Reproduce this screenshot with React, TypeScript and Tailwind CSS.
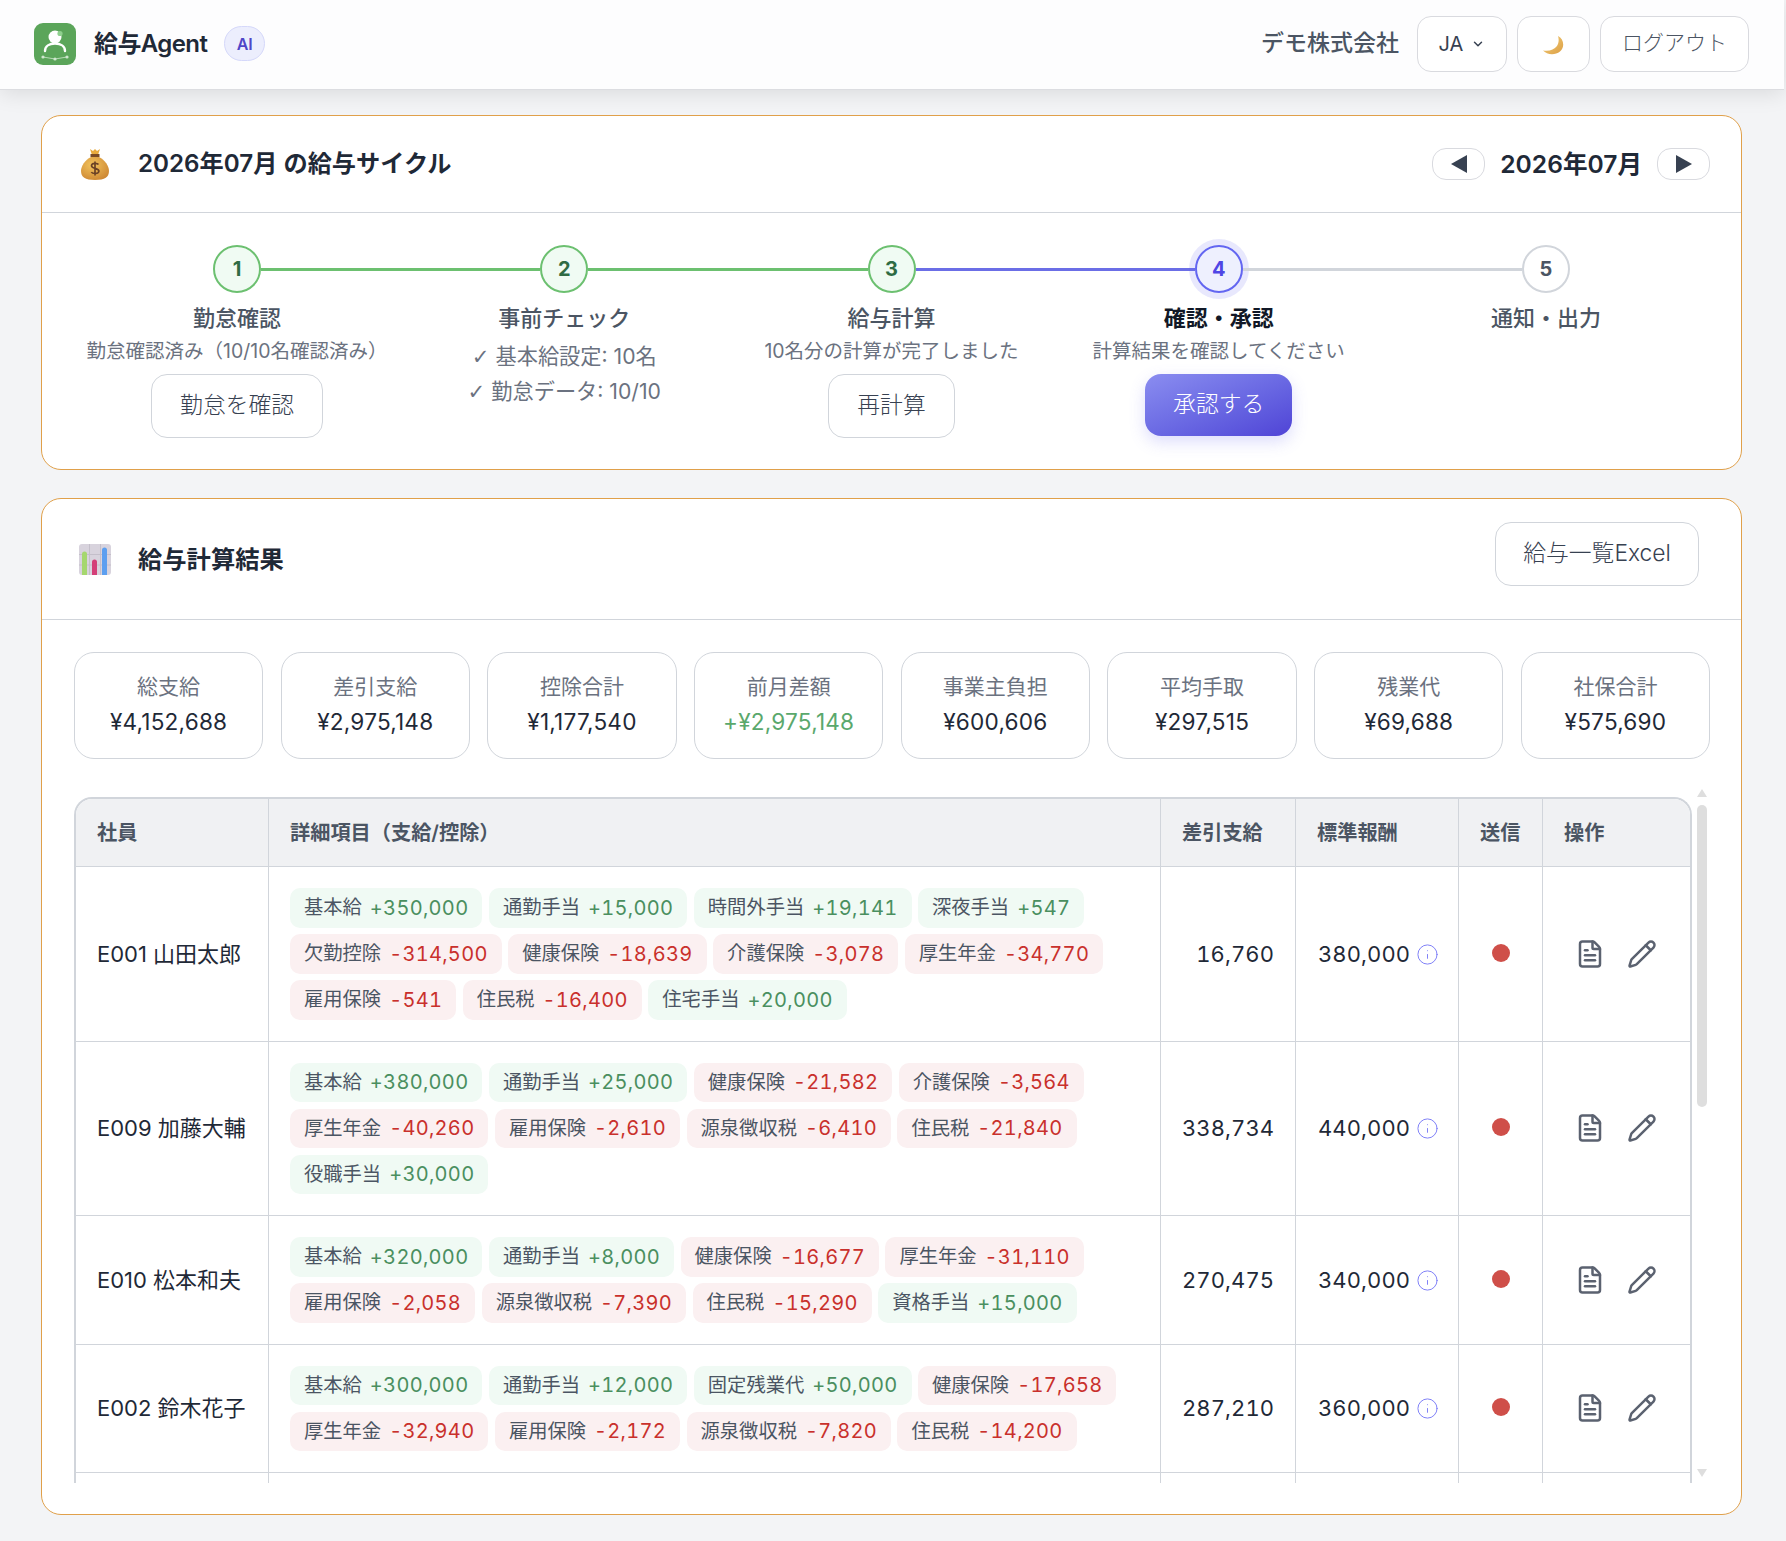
import React from "react";
import { ChevronDown, FileText, Info, Pencil } from "lucide-react";

interface Item {
  name: string;
  value: string;
}

interface Row {
  employee: string;
  net: string;
  standard: string;
  items: Item[];
}

const it = (name: string, value: string): Item => ({ name, value });

const rows: Row[] = [
  {
    employee: "E001 山田太郎",
    net: "16,760",
    standard: "380,000",
    items: [
      it("基本給", "+350,000"),
      it("通勤手当", "+15,000"),
      it("時間外手当", "+19,141"),
      it("深夜手当", "+547"),
      it("欠勤控除", "-314,500"),
      it("健康保険", "-18,639"),
      it("介護保険", "-3,078"),
      it("厚生年金", "-34,770"),
      it("雇用保険", "-541"),
      it("住民税", "-16,400"),
      it("住宅手当", "+20,000"),
    ],
  },
  {
    employee: "E009 加藤大輔",
    net: "338,734",
    standard: "440,000",
    items: [
      it("基本給", "+380,000"),
      it("通勤手当", "+25,000"),
      it("健康保険", "-21,582"),
      it("介護保険", "-3,564"),
      it("厚生年金", "-40,260"),
      it("雇用保険", "-2,610"),
      it("源泉徴収税", "-6,410"),
      it("住民税", "-21,840"),
      it("役職手当", "+30,000"),
    ],
  },
  {
    employee: "E010 松本和夫",
    net: "270,475",
    standard: "340,000",
    items: [
      it("基本給", "+320,000"),
      it("通勤手当", "+8,000"),
      it("健康保険", "-16,677"),
      it("厚生年金", "-31,110"),
      it("雇用保険", "-2,058"),
      it("源泉徴収税", "-7,390"),
      it("住民税", "-15,290"),
      it("資格手当", "+15,000"),
    ],
  },
  {
    employee: "E002 鈴木花子",
    net: "287,210",
    standard: "360,000",
    items: [
      it("基本給", "+300,000"),
      it("通勤手当", "+12,000"),
      it("固定残業代", "+50,000"),
      it("健康保険", "-17,658"),
      it("厚生年金", "-32,940"),
      it("雇用保険", "-2,172"),
      it("源泉徴収税", "-7,820"),
      it("住民税", "-14,200"),
    ],
  },
];

const kpis = [
  { label: "総支給", value: "¥4,152,688" },
  { label: "差引支給", value: "¥2,975,148" },
  { label: "控除合計", value: "¥1,177,540" },
  { label: "前月差額", value: "+¥2,975,148", green: true },
  { label: "事業主負担", value: "¥600,606" },
  { label: "平均手取", value: "¥297,515" },
  { label: "残業代", value: "¥69,688" },
  { label: "社保合計", value: "¥575,690" },
];

const LogoMark = () => (
  <svg viewBox="0 0 42 42" className="h-[42px] w-[42px]">
    <rect width="42" height="42" rx="9" fill="#5ba55a" />
    <circle cx="21" cy="14" r="6.500" fill="#fff" />
    <circle cx="26" cy="10.500" r="2.600" fill="#8fd08e" />
    <path d="M11 28c0-5 4.500-7.500 10-7.500S31 23 31 28" fill="none" stroke="#fff" strokeWidth="2.400" strokeLinecap="round" />
    <path d="M9 34l12 2 12-2" fill="none" stroke="#b5d9b4" strokeWidth="1" />
    <circle cx="9" cy="34" r="1.600" fill="#cfe6ce" />
    <circle cx="21" cy="36" r="1.600" fill="#cfe6ce" />
    <circle cx="33" cy="34" r="1.600" fill="#cfe6ce" />
  </svg>
);

const MoneyBag = () => (
  <svg viewBox="0 0 28 32" className="h-[32px] w-[28px]">
    <defs>
      <radialGradient id="bag" cx="0.4" cy="0.35" r="0.8">
        <stop offset="0" stopColor="#f2c35c" />
        <stop offset="1" stopColor="#c9802e" />
      </radialGradient>
    </defs>
    <path d="M9 1l3 2 2-2 2 2 3-2-2 6h-6z" fill="#e8a93c" />
    <rect x="9.500" y="6" width="9" height="3" fill="#7a4a24" />
    <path d="M10 9h8c6 3 10 9 10 14 0 6-4 9-14 9S0 29 0 23C0 18 4 12 10 9z" fill="url(#bag)" />
    <path d="M17.500 16.500c-1-1.500-7-2-7 1.200 0 3.300 7.400 2 7.400 5.400 0 3.300-6.400 2.800-7.600 1M14 13.500v14" fill="none" stroke="#6b4226" strokeWidth="1.700" />
  </svg>
);

const BarChart = () => (
  <svg viewBox="0 0 32 31" className="h-[31px] w-[32px]">
    <rect width="32" height="31" rx="3" fill="#d8d3dd" />
    <path d="M10.500 0v31M21.500 0v31M0 10.500h32M0 21h32" stroke="#c4bfca" strokeWidth="1" />
    <path d="M3 10a2.500 2.500 0 015 0v21H3z" fill="#a5d76e" />
    <path d="M13 18a2.500 2.500 0 015 0v13h-5z" fill="#d43f78" />
    <path d="M23 6a2.500 2.500 0 015 0v25h-5z" fill="#5c9ff0" />
  </svg>
);

const Moon = () => (
  <svg viewBox="0 0 21 19" className="h-[19px] w-[21px]">
    <defs>
      <linearGradient id="moon" x1="0" y1="0" x2="1" y2="1">
        <stop offset="0" stopColor="#f3cf7a" />
        <stop offset="1" stopColor="#dc9f45" />
      </linearGradient>
    </defs>
    <path d="M15 0C21 3 22 11 17 15.500C12 19.500 4 19 0 14.500C6 15.500 11 14 14 10C16 7 16 3 15 0z" fill="url(#moon)" />
  </svg>
);

const Triangle = ({ dir }: { dir: "left" | "right" }) => (
  <svg viewBox="0 0 16 18" className="h-[18px] w-[16px]">
    <path d={dir === "left" ? "M16 0v18L0 9z" : "M0 0v18L16 9z"} fill="#374151" />
  </svg>
);

const OutlineButton = ({ className, children }: { className: string; children: React.ReactNode }) => (
  <button className={`rounded-[16px] border border-[#d1d5db] bg-white pb-[1px] text-[22.800px] font-light text-[#374151] ${className}`}>
    {children}
  </button>
);

const Step = ({
  n,
  label,
  state,
  left,
  right,
  children,
}: {
  n: number;
  label: string;
  state: "done" | "active" | "todo";
  left: string;
  right: string;
  children?: React.ReactNode;
}) => (
  <div className="flex flex-col items-center">
    <div className="flex w-full items-center">
      <div className={`h-[3px] flex-1 ${left}`} />
      {state === "done" && (
        <div className="flex h-[48px] w-[48px] items-center justify-center rounded-full border-2 border-[#6cc070] bg-[#f0fbf3] text-[20px] font-bold text-[#2f6b44]">
          {n}
        </div>
      )}
      {state === "active" && (
        <div className="flex h-[48px] w-[48px] items-center justify-center rounded-full border-2 border-[#6366f1] bg-[#eef0fe] text-[20px] font-bold text-[#4f46e5] shadow-[0_0_0_6px_rgba(99,102,241,0.15)]">
          {n}
        </div>
      )}
      {state === "todo" && (
        <div className="flex h-[48px] w-[48px] items-center justify-center rounded-full border-2 border-[#d1d5db] bg-white text-[20px] font-bold text-[#4b5563]">
          {n}
        </div>
      )}
      <div className={`h-[3px] flex-1 ${right}`} />
    </div>
    <div className={`mt-[9px] text-[22px] leading-[32px] ${state === "active" ? "font-semibold text-[#111827]" : "font-medium text-[#4b5563]"}`}>
      {label}
    </div>
    {children}
  </div>
);

const Desc = ({ children }: { children: React.ReactNode }) => (
  <div className="mt-[3px] whitespace-nowrap text-[19.500px] leading-[28px] text-[#6b7280]">{children}</div>
);

const Chip = ({ item }: { item: Item }) => {
  const plus = item.value.startsWith("+");
  return (
    <span className={`flex h-[39.500px] items-center gap-[8px] rounded-[10px] px-[14px] text-[19.300px] text-[#4b5563] ${plus ? "bg-[#f0faf4]" : "bg-[#fbf0f1]"}`}>
      {item.name}
      <span className={`text-[20px] tabular-nums tracking-[0.3px] ${plus ? "text-[#4a8f5f]" : "text-[#c9302c]"}`}>{item.value}</span>
    </span>
  );
};

const Th = ({ children, last }: { children: React.ReactNode; last?: boolean }) => (
  <th className={`h-[68px] border-b border-[#d1d5db] bg-[#f0f1f3] px-[21px] pt-[2px] text-left text-[20.200px] font-semibold text-[#4b5563] ${last ? "" : "border-r"}`}>
    {children}
  </th>
);

const App: React.FC = () => {
  return (
    <div className="min-h-[1541px] bg-[#f3f4f6] font-['Inter','Noto_Sans_CJK_JP',sans-serif]">
      <header className="relative mr-[2px] flex h-[90px] items-center justify-between border-b border-[#dcdde1] bg-[#fdfdfe] pb-[2px] pl-[34px] pr-[35px] shadow-[0_4px_20px_rgba(0,0,0,0.1)]">
        <div className="flex items-center">
          <LogoMark />
          <span className="ml-[18px] text-[24px] font-semibold tracking-[-0.6px] text-[#1f2937]">給与Agent</span>
          <span className="ml-[17px] flex h-[35px] w-[41px] items-center justify-center rounded-full border border-[#d5d8fa] bg-[#eceefd] text-[16px] font-semibold text-[#4f46c8]">
            AI
          </span>
        </div>
        <div className="flex items-center">
          <span className="mr-[18px] text-[23px] font-medium text-[#4b5563]">デモ株式会社</span>
          <button className="flex h-[56px] w-[90px] items-center justify-center gap-[8px] rounded-[14px] border border-[#d9dadf] bg-white text-[20px] text-[#374151]">
            JA
            <ChevronDown size={14} strokeWidth={2.5} />
          </button>
          <button className="ml-[10px] flex h-[56px] w-[73px] items-center justify-center rounded-[14px] border border-[#d9dadf] bg-white pt-[4px]">
            <Moon />
          </button>
          <button className="ml-[10px] h-[56px] w-[149px] rounded-[14px] border border-[#d9dadf] bg-white pb-[2px] text-[21px] font-light text-[#4b5563]">
            ログアウト
          </button>
        </div>
      </header>

      <main className="pl-[41px] pr-[44px] pt-[25px]">
        <section className="rounded-[20px] border border-[#e0a04a] bg-white">
          <div className="flex h-[97px] items-center justify-between border-b border-[#d1d5db] pl-[39px] pr-[31px]">
            <div className="flex items-center">
              <MoneyBag />
              <h2 className="ml-[29px] text-[24.200px] font-semibold text-[#1f2937]">2026年07月 の給与サイクル</h2>
            </div>
            <div className="flex items-center">
              <button className="flex h-[32px] w-[53px] items-center justify-center rounded-[14px] border border-[#d9dadf] bg-white">
                <Triangle dir="left" />
              </button>
              <span className="mx-[15px] text-[24.600px] font-semibold text-[#1f2937]">2026年07月</span>
              <button className="flex h-[32px] w-[53px] items-center justify-center rounded-[14px] border border-[#d9dadf] bg-white">
                <Triangle dir="right" />
              </button>
            </div>
          </div>
          <div className="grid h-[256px] grid-cols-5 px-[31.500px] pt-[32px]">
            <Step n={1} label="勤怠確認" state="done" left="" right="bg-[#6cc070]">
              <Desc>勤怠確認済み（10/10名確認済み）</Desc>
              <OutlineButton className="mt-[9px] h-[64px] w-[172px]">勤怠を確認</OutlineButton>
            </Step>
            <Step n={2} label="事前チェック" state="done" left="bg-[#6cc070]" right="bg-[#6cc070]">
              <div className="mt-[5px] text-center text-[21.200px] leading-[34px] text-[#6b7280]">
                <div><span className="font-['DejaVu_Sans']">✓</span> 基本給設定: 10名</div>
                <div><span className="font-['DejaVu_Sans']">✓</span> 勤怠データ: 10/10</div>
              </div>
            </Step>
            <Step n={3} label="給与計算" state="done" left="bg-[#6cc070]" right="bg-[#6b6ee6]">
              <Desc>10名分の計算が完了しました</Desc>
              <OutlineButton className="mt-[9px] h-[64px] w-[127px]">再計算</OutlineButton>
            </Step>
            <Step n={4} label="確認・承認" state="active" left="bg-[#6b6ee6]" right="bg-[#d1d5db]">
              <Desc>計算結果を確認してください</Desc>
              <button className="mt-[9px] h-[62px] w-[147px] rounded-[16px] bg-gradient-to-br from-[#8b8df0] to-[#5043d6] pb-[1px] text-[22.800px] font-light text-white shadow-[0_6px_16px_rgba(99,102,241,0.22)]">
                承認する
              </button>
            </Step>
            <Step n={5} label="通知・出力" state="todo" left="bg-[#d1d5db]" right="" />
          </div>
        </section>

        <section className="mt-[28px] rounded-[20px] border border-[#e0a04a] bg-white">
          <div className="flex h-[121px] items-center justify-between border-b border-[#d1d5db] pl-[37px] pr-[42px]">
            <div className="flex items-center">
              <BarChart />
              <h2 className="ml-[27px] text-[24.300px] font-semibold text-[#1f2937]">給与計算結果</h2>
            </div>
            <OutlineButton className="mb-[10px] h-[64px] w-[204px]">給与一覧Excel</OutlineButton>
          </div>

          <div className="pb-[31px] pl-[32px] pr-[31px] pt-[32px]">
            <div className="grid grid-cols-8 gap-[17.500px]">
              {kpis.map((kpi) => (
                <div key={kpi.label} className="flex h-[107px] flex-col items-center justify-center rounded-[20px] border border-[#d1d5db] bg-white pb-[2px]">
                  <div className="text-[21px] leading-[34px] text-[#6b7280]">{kpi.label}</div>
                  <div className={`text-[22.600px] leading-[36px] tracking-[0.2px] ${kpi.green ? "text-[#5aa86c]" : "text-[#1f2937]"}`}>{kpi.value}</div>
                </div>
              ))}
            </div>

            <div className="mt-[29px] flex h-[695px] gap-[5px] pr-[3px]">
              <div className="mt-[9px] min-w-0 flex-1 overflow-hidden rounded-t-[18px] border-x-2 border-t-2 border-[#d1d5db]">
                <table className="w-full table-fixed border-separate border-spacing-0">
                  <colgroup>
                    <col className="w-[193px]" />
                    <col className="w-[892px]" />
                    <col className="w-[135px]" />
                    <col className="w-[163px]" />
                    <col className="w-[84px]" />
                    <col />
                  </colgroup>
                  <thead>
                    <tr>
                      <Th>社員</Th>
                      <Th>詳細項目（支給/控除）</Th>
                      <Th>差引支給</Th>
                      <Th>標準報酬</Th>
                      <Th>送信</Th>
                      <Th last>操作</Th>
                    </tr>
                  </thead>
                  <tbody>
                    {rows.map((row) => (
                      <tr key={row.employee}>
                        <td className="border-b border-r border-[#d1d5db] px-[21px] pt-[1px] text-[22px] text-[#1f2937]">{row.employee}</td>
                        <td className="border-b border-r border-[#d1d5db] px-[21px] py-[21px]">
                          <div className="flex flex-wrap gap-[6.500px]">
                            {row.items.map((item) => (
                              <Chip key={item.name} item={item} />
                            ))}
                          </div>
                        </td>
                        <td className="border-b border-r border-[#d1d5db] px-[21px] pt-[1px] text-right text-[22px] tabular-nums tracking-[0.1px] text-[#1f2937]">{row.net}</td>
                        <td className="border-b border-r border-[#d1d5db] px-[22px] pt-[1px] text-[22px] tabular-nums tracking-[0.1px] text-[#1f2937]">
                          <span className="flex items-center gap-[6px]">
                            {row.standard}
                            <Info size={23} strokeWidth={1} className="shrink-0 text-[#7b7cf7]" />
                          </span>
                        </td>
                        <td className="border-b border-r border-[#d1d5db]">
                          <div className="mx-auto mb-[2px] h-[18px] w-[18px] rounded-full bg-[#cf4f49]" />
                        </td>
                        <td className="border-b border-[#d1d5db]">
                          <div className="flex items-center justify-center gap-[22px] pr-[2px] text-[#5b6270]">
                            <FileText size={30} strokeWidth={2} />
                            <Pencil size={30} strokeWidth={2} />
                          </div>
                        </td>
                      </tr>
                    ))}
                    <tr>
                      <td className="h-[60px] border-r border-[#d1d5db]" />
                      <td className="border-r border-[#d1d5db]" />
                      <td className="border-r border-[#d1d5db]" />
                      <td className="border-r border-[#d1d5db]" />
                      <td className="border-r border-[#d1d5db]" />
                      <td />
                    </tr>
                  </tbody>
                </table>
              </div>

              <div className="flex w-[10px] flex-col items-center pt-[1px]">
                <svg viewBox="0 0 10 8" className="h-[8px] w-[10px]">
                  <path d="M5 0l5 8H0z" fill="#dedede" />
                </svg>
                <div className="mt-[8px] h-[302px] w-[10px] rounded-full bg-[#dedede]" />
                <div className="flex-1" />
                <svg viewBox="0 0 10 8" className="mb-[6px] h-[8px] w-[10px]">
                  <path d="M0 0h10L5 8z" fill="#dedede" />
                </svg>
              </div>
            </div>
          </div>
        </section>
      </main>
    </div>
  );
};

export default App;
